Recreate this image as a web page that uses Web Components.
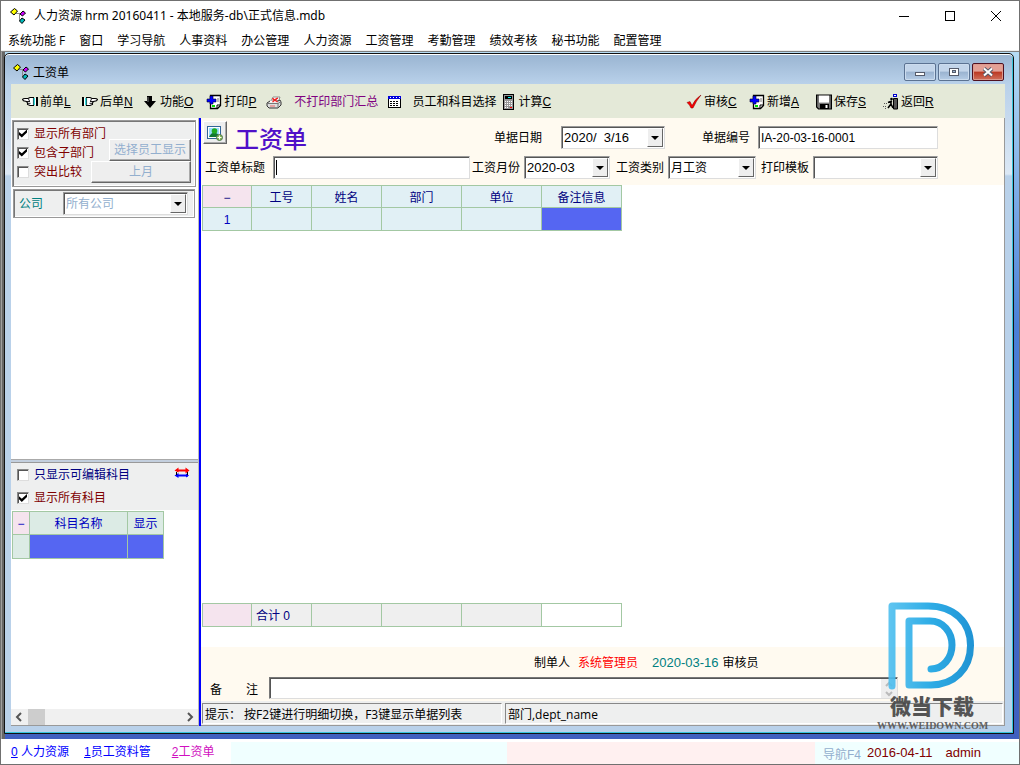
<!DOCTYPE html>
<html lang="zh-CN">
<head>
<meta charset="utf-8">
<title>人力资源 hrm</title>
<style>
  html, body { margin: 0; height: 100%; }
  body { font: 12px/16px "Liberation Sans", "Noto Sans CJK SC", sans-serif; color: #000; }
</style>
</head>
<body>
<hr-app></hr-app>
<script>
const define = (name, render) => customElements.define(name, class extends HTMLElement {
  connectedCallback() {
    if (this.shadowRoot) return;
    const t = document.createElement('template');
    t.innerHTML = '<style>*{box-sizing:border-box}:host{box-sizing:border-box}</style>' + render(this);
    this.attachShadow({ mode: 'open' }).append(t.content.cloneNode(true));
  }
});
const attr = (el, n, d = '') => el.getAttribute(n) ?? d;

/* ---------- icons ---------- */
const hand = `<path d="M.5 5.500Q1 4.500 3 4.500H6L8 3.500H11.500V11.500H8L5.500 10.500V9L4.500 7.500 1.500 6.700z" fill="#fff" stroke="#000" stroke-width="1.100"/><path d="M5 7.500H8M6 9.300H8.500M6 5.500L8 6.500" stroke="#000" fill="none" stroke-width=".9"/><rect x="11.500" y="4" width="1.500" height="7" fill="#3dd"/><rect x="13" y="4" width="1" height="7" fill="#fff"/><rect x="14" y="3" width="2" height="9"/>`;
const icons = {
  app: `<g shape-rendering="crispEdges"><path d="M6 5h6M9 5v7h3" stroke="#888" fill="none"/></g><path d="M.5 4L4.500.5 7.500 3 4 7z" fill="#ff0" stroke="#000"/><path d="M10 6l3-3 2.500 2-3 3z" fill="#c0f" stroke="#000"/><path d="M9.500 13l2.500-3 3 2-3 3.500z" fill="#0bb" stroke="#000"/>`,
  prev: hand,
  next: `<g transform="matrix(-1 0 0 1 16 0)">${hand}</g>`,
  down: `<path d="M5 2h5v5h4L8 14 2 7h3z"/><path d="M6 3v5" stroke="#777"/>`,
  page: `<path d="M4.500 1.500h10v10l-3 3h-7z" fill="#fff" stroke="#000" stroke-width="1.300"/><path d="M14 11h-3v3" fill="none" stroke="#000"/><path d="M11 5h2M11 7h2" stroke="#777"/><rect x="6" y="11" width="3" height="2" fill="#0d0"/><path d="M4 2h3v3h3v3H7v2H4V8H1V5h3z" fill="#00f" stroke="#003" stroke-width=".6"/>`,
  printer: `<path d="M4 9l3-6h7l-2 6z" fill="#fff" stroke="#777" stroke-width=".8"/><path d="M6.500 4.500l5 3M12 4L6.500 7" stroke="#e22" stroke-width="1.300"/><path d="M1 9l3-2h8l2-1 1 2v3l-3 3H3l-2-2z" fill="#ddd" stroke="#333"/><path d="M4 6.500h7v2H4z" fill="#fff"/><path d="M6.500 4.500l5 3.500M11.500 4L6.500 8" stroke="#e22" stroke-width="1.300"/><path d="M1 9.500h11l3-2M12 9.500v4" fill="none" stroke="#777"/><path d="M4 12h5" stroke="#e66"/>`,
  calendar: `<path d="M1 2h13v12H1z"/><path d="M2 5h11v8H2z" fill="#fff"/><path d="M1 2h13v3H1z" fill="#00d"/><path d="M3 3.500h10" stroke="#fff" stroke-dasharray="1 2"/><path d="M3 7.500h9M3 9.500h9M3 11.500h9" stroke="#000" stroke-dasharray="2 1"/>`,
  calc: `<rect x="3.500" y=".5" width="10" height="15" fill="#999" stroke="#000"/><rect x="5" y="2" width="7" height="3"/><path d="M8 3.500h3" stroke="#0ff"/><path d="M5 7.500h7M5 9.500h7M5 11.500h7M5 13.500h4" stroke="#fff" stroke-dasharray="1 1"/><path d="M10 13.500h2" stroke="#f00"/>`,
  check: `<path d="M1 8.500l3-1 2 4Q9 5 15 1q-5 6-8 13H5Q4 11 1 8.500z" fill="#f00" stroke="#700" stroke-width=".5"/>`,
  save: `<path d="M.6 1h14.800v14H2.500L.6 13z" fill="#777" stroke="#000" stroke-width="1.200"/><rect x="3" y="1.600" width="10" height="7" fill="#fff"/><rect x="4" y="10" width="9" height="5"/><rect x="9.500" y="11" width="2" height="3" fill="#fff"/>`,
  exit: `<path d="M10.500 4.500h4V15h-4z" fill="#555" stroke="#000"/><rect x="10.500" y=".5" width="3" height="2" fill="#fff" stroke="#00c"/><circle cx="8.500" cy="5" r="1.300"/><path d="M9 7L5 8.500M8 7v3l-3 4M8 10l2 4" stroke="#000" stroke-width="1.600" fill="none"/><path d="M1 9.500h3M0 12.500h4M2 14.500h2" stroke="#555" stroke-dasharray="1 1"/>`,
  swap: `<path d="M3 10.500h11" stroke-width="2" stroke="#00f"/><path d="M3 5.500h11" stroke-width="2" stroke="#f00"/><path d="M11.500 2.500l4 3-4 3zM4.500 2.500l-4 3 4 2z" fill="#f00"/><path d="M4.500 8l-4 2.500 4 2.500zM12 8.500l3 2-3 2z" fill="#00f"/><path d="M2.500 7v3M13.500 7v3" stroke="#000"/>`,
  picture: `<rect x=".5" y="1.500" width="13" height="12" fill="#fff" stroke="#369"/><rect x="2" y="3" width="10" height="9" fill="#9df"/><path d="M2 12q2-4 4-4h3q3 1 3 4z" fill="#173"/><circle cx="7.500" cy="6" r="2.800" fill="#2a2"/><circle cx="12.500" cy="12.500" r="3" fill="#8b5" stroke="#575"/><path d="M12.500 10.500v4M10.500 12.500h4" stroke="#fff"/>`
};
define('ui-icon', el => `<style>:host{display:block;width:16px;height:16px;flex:none}svg{display:block}</style>
<svg width="16" height="16" viewBox="0 0 16 16" aria-hidden="true">${icons[attr(el, 'name')]}</svg>`);

/* ---------- controls ---------- */
define('tool-button', el => `<style>
:host{display:block;flex:none}
button{display:flex;align-items:center;height:20px;padding:0;border:0;background:none;font:inherit;color:inherit;white-space:nowrap}
.i{width:20px;display:flex;justify-content:center}
.t{min-width:var(--text,33px);text-align:left}
</style><button type="button" ${el.hasAttribute('label') ? `aria-label="${attr(el, 'label')}"` : ''}>${el.hasAttribute('icon') ? `<span class="i"><ui-icon name="${attr(el, 'icon')}"></ui-icon></span>` : ''}<span class="t"><slot></slot></span></button>`);

define('ui-check', el => `<style>
:host{display:block}
label{display:flex;align-items:center;height:19px;gap:5px;white-space:nowrap}
input{appearance:none;margin:0;width:12px;height:12px;flex:none;background:#fff;border:1px solid;border-color:#888 #ddd #ddd #888;box-shadow:inset 1px 1px #555}
input:checked::before{content:"";display:block;width:8px;height:8px;margin:1px;background:#000;clip-path:polygon(0 30%,35% 60%,100% 0,100% 38%,35% 100%,0 68%)}
</style><label><input type="checkbox" ${el.hasAttribute('checked') ? 'checked' : ''}><slot></slot></label>`);

define('ui-push', () => `<style>
:host{display:block}
button{display:block;width:100%;height:22px;padding:0;font:inherit;line-height:20px;color:#93afce;background:#eee;border:1px solid;border-color:#fff #666 #666 #fff;box-shadow:inset -1px -1px #aaa}
</style><button type="button" disabled><slot></slot></button>`);

/* label + text box or drop-down; --gap is the space between the two */
define('ui-field', el => {
  const v = attr(el, 'value');
  const control = attr(el, 'kind') === 'select'
    ? `<select id="c" ${el.hasAttribute('disabled') ? 'disabled' : ''}><option>${v}</option></select><i></i>`
    : `<input id="c" type="text" value="${v}">`;
  return `<style>
:host{display:flex;align-items:center;gap:var(--gap,4px);flex:none}
label{white-space:nowrap;color:inherit;padding-top:1px}
.box{position:relative;width:var(--w,auto);flex:1;height:23px;background:#fff;border:1px solid;border-color:#999 #ddd #ddd #999;box-shadow:inset 1px 1px #555}
input,select{appearance:none;display:block;width:100%;height:21px;margin:0;padding:0 2px;border:0;border-radius:0;background:none;color:#000;opacity:1;font:inherit;font-size:var(--fs,12px);outline:0}
:host([disabled]) select{color:#93afce}
:host([caret]) input{background:linear-gradient(#000,#000) 2px 3px/1px 15px no-repeat}
i{position:absolute;right:1px;top:1px;bottom:1px;width:16px;background:#eee;border:1px solid;border-color:#fff #666 #666 #fff;pointer-events:none}
i::before{content:"";position:absolute;left:3px;top:7px;border:4px solid transparent;border-top-color:#000;border-bottom:0}
</style><label for="c">${attr(el, 'label')}</label><div class="box">${control}</div>`;
});

/* ---------- application frame ---------- */
define('hr-titlebar', () => `<style>
:host{display:flex;align-items:center;height:29px;padding:0 17px 0 9px;background:#fff;font-family:"Noto Sans","Noto Sans CJK SC",sans-serif}
h1{flex:1;margin:0 0 0 8px;font-size:12px;font-weight:400}
button{border:0;padding:0;background:none;width:12px;height:12px;margin-left:34px}
svg{display:block}
</style><ui-icon name="app"></ui-icon><h1>人力资源 hrm 20160411 - 本地服务-db\\正式信息.mdb</h1>
<button aria-label="最小化"><svg width="12" height="12" stroke="#000"><path d="M1 6.500h10"/></svg></button>
<button aria-label="最大化"><svg width="12" height="12" stroke="#000" fill="none"><rect x="1.500" y="1.500" width="9" height="9"/></svg></button>
<button aria-label="关闭"><svg width="12" height="12" stroke="#000"><path d="M1 1l10 10M11 1L1 11"/></svg></button>`);

define('hr-menubar', () => `<style>
:host{display:flex;align-items:center;gap:14px;height:21px;padding:2px 7px 0;background:#fff;border-bottom:1px solid #eee;font-family:"Open Sans","Noto Sans CJK SC",sans-serif}
a{color:#000;text-decoration:none;white-space:nowrap}
</style>` + ['系统功能 F', '窗口', '学习导航', '人事资料', '办公管理', '人力资源', '工资管理', '考勤管理', '绩效考核', '秘书功能', '配置管理'].map(t => `<a href="#">${t}</a>`).join(''));

define('hr-toolbar', () => `<style>
:host{display:flex;align-items:center;height:34px;padding:2px 71px 0 9px;background:#e4e9d8}
div{display:flex;gap:7px}
.more{margin-left:4px}.text{--text:84px;color:#800080;margin-left:3px}.icon{--text:0px}
.cal{--text:84px;margin:0 -5px 0 0}
.r{margin-left:auto;gap:10px}
.r .far{margin-left:4px}
</style><div>
<tool-button icon="prev">前单<u>L</u></tool-button>
<tool-button icon="next">后单<u>N</u></tool-button>
<tool-button icon="down">功能<u>O</u></tool-button>
<tool-button icon="page" class="more">打印<u>P</u></tool-button>
<tool-button icon="printer" label="打印机" class="icon"></tool-button>
<tool-button class="text">不打印部门汇总</tool-button>
<tool-button icon="calendar" label="日历" class="icon"></tool-button>
<tool-button class="cal">员工和科目选择</tool-button>
<tool-button icon="calc">计算<u>C</u></tool-button>
</div><div class="r">
<tool-button icon="check">审核<u>C</u></tool-button>
<tool-button icon="page">新增<u>A</u></tool-button>
<tool-button icon="save" class="far">保存<u>S</u></tool-button>
<tool-button icon="exit" class="far">返回<u>R</u></tool-button>
</div>`);

define('hr-scrollbar', () => `<style>
:host{display:flex;align-items:center;height:16px;background:#f0f0f0}
b{width:17px;height:16px;background:#cdcdcd}
svg{width:17px;height:16px;fill:none;stroke:#555;stroke-width:2}
svg:last-child{margin-left:auto}
</style><svg viewBox="0 0 17 16"><path d="M10 4L6 8l4 4"/></svg><b></b><svg viewBox="0 0 17 16"><path d="M7 4l4 4-4 4"/></svg>`);

const tableCss = `table{border-collapse:collapse;table-layout:fixed}
th,td{padding:2px 0 0;height:23px;border:1px solid #a3c8a3;font-weight:400;text-align:center;color:#000080;background:#e1f0f5}
th{height:22px}
.p{background:#f5e4ee}.s{background:#5566f2}.g{background:#efefef}.w{background:#fff}.k{background:#dcebe5}.k,.n{color:#0000c0}`;

define('hr-sidebar', () => `<style>
:host{display:flex;flex-direction:column;width:188px;flex:none;background:#fff;border-bottom:1px solid #999;border-right:1px solid #bbb}
.box{background:#eeefef;border:1px solid #999;box-shadow:inset 1px 1px #777,inset -1px -1px #fff}
.top{display:flex;height:67px;margin:2px 2px 0 1px;padding:3px 4px}
.top .l{width:74px;flex:none;color:#800000}
.top .b{flex:1;display:flex;flex-direction:column;justify-content:flex-end}
.top ui-push:first-child{margin-left:18px}
.co{height:29px;margin:2px 3px 0 2px;padding:2px 6px 2px 5px}
.co ui-field{color:#008080;--gap:20px}
.list{flex:9 1 0}
.grid{flex:8 1 0;display:flex;flex-direction:column}
.split{height:4px;background:#c3cfde;border-top:1px solid #aaa;border-bottom:1px solid #999}
.low{height:47px;padding:2px 8px 2px 6px;background:#eeefef;display:grid;grid-template-columns:1fr auto;row-gap:3px}
.low ui-check:first-child{color:#000080}.low ui-check:last-child{color:#800000}
${tableCss} table{width:152px;margin:1px 0 0 1px}
td{height:24px}th{height:23px}
hr-scrollbar{margin-top:auto}
</style>
<div class="box top"><div class="l"><ui-check checked>显示所有部门</ui-check><ui-check checked>包含子部门</ui-check><ui-check>突出比较</ui-check></div>
<div class="b"><ui-push>选择员工显示</ui-push><ui-push>上月</ui-push></div></div>
<div class="box co"><ui-field kind="select" label="公司" value="所有公司" disabled></ui-field></div>
<div class="list"></div><div class="split"></div>
<div class="low"><ui-check>只显示可编辑科目</ui-check><ui-icon name="swap"></ui-icon><ui-check checked>显示所有科目</ui-check></div>
<div class="grid"><table><colgroup><col style="width:17px"><col style="width:98px"><col style="width:36px"></colgroup>
<tr><th class="p n">−</th><th class="k">科目名称</th><th class="k">显示</th></tr><tr><td class="k"></td><td class="s"></td><td class="s"></td></tr></table>
<hr-scrollbar></hr-scrollbar></div>`);

const cols = `<colgroup><col style="width:49px"><col style="width:60px"><col style="width:70px"><col style="width:80px"><col style="width:80px"><col style="width:80px"></colgroup>`;
define('hr-payslip', () => `<style>
:host{display:flex;flex-direction:column;flex:1;min-width:0;background:#fff;border-right:1px solid #999}
.head{background:#fffaf0;height:67px;padding:3px 66px 0 2px}
.r1,.r2{display:flex;align-items:center}
.r1{height:33px}.r2{height:27px;padding-left:2px}
.pic{width:24px;height:23px;padding:2px 3px;background:#eee;border:1px solid;border-color:#fff #666 #666 #fff;box-shadow:inset -1px -1px #aaa;align-self:flex-start}
h2{margin:4px auto 0 8px;font-size:24px;line-height:32px;font-weight:500;color:#5010c8}
.date{--w:104px;--gap:19px;--fs:13px;margin-right:37px}
.no{--w:180px;--gap:8px;--fs:12px}
.title{flex:1;--gap:8px;margin-right:2px}
.mon{--w:86px;margin-right:6px;--fs:13px}.kind{--w:88px;margin-right:5px}.tpl{--w:125px}
${tableCss} table{width:420px;margin-left:1px}
.body{flex:1}
.sum td{text-align:left;padding-left:4px}
.foot{background:#fffaf0;height:54px;margin-top:20px;padding:8px 106px 0 8px}
.sign{display:flex;padding-left:325px;height:16px}
.sign b{font-weight:400;color:#f00;margin:0 14px 0 8px}.sign time{color:#008080;margin-right:4px;font-size:13px;flex:none}
.memo{display:flex;align-items:center;height:22px;margin-top:6px;position:relative}
.memo label{width:60px;flex:none;display:flex;gap:24px;padding:3px 0 0 1px}
textarea{flex:1;height:22px;resize:none;margin:0;border:1px solid;border-color:#777 #ddd #ddd #777;box-shadow:inset 1px 1px #555;font:inherit;outline:0;overflow:hidden;background:#fff}
.spin{position:absolute;right:1px;top:2px;width:16px;height:19px;background:#eee}
.status{display:flex;gap:3px;height:25px;padding:2px 1px 1px 1px;background:#eeefef;border-bottom:1px solid #999;font-family:"Open Sans","Noto Sans CJK SC",sans-serif}
.status span{flex:1;border:1px solid;border-color:#888 #fff #fff #888;padding:3px 2px 0;white-space:nowrap}
.status span:first-child{flex:none;width:300px}
</style>
<div class="head"><div class="r1"><button class="pic" aria-label="图片"><ui-icon name="picture"></ui-icon></button><h2>工资单</h2>
<ui-field class="date" kind="select" label="单据日期" value="2020/&nbsp; 3/16"></ui-field><ui-field class="no" label="单据编号" value="IA-20-03-16-0001"></ui-field></div>
<div class="r2"><ui-field class="title" label="工资单标题" caret></ui-field><ui-field class="mon" kind="select" label="工资月份" value="2020-03"></ui-field>
<ui-field class="kind" kind="select" label="工资类别" value="月工资"></ui-field><ui-field class="tpl" kind="select" label="打印模板"></ui-field></div></div>
<div class="body"><table>${cols}<tr><th class="p">−</th><th>工号</th><th>姓名</th><th>部门</th><th>单位</th><th>备注信息</th></tr>
<tr><td class="n">1</td><td></td><td></td><td></td><td></td><td class="s"></td></tr></table></div>
<table class="sum">${cols}<tr><td class="p"></td><td class="g">合计 0</td><td class="g"></td><td class="g"></td><td class="g"></td><td class="w"></td></tr></table>
<div class="foot"><div class="sign">制单人<b>系统管理员</b><time>2020-03-16</time>审核员</div>
<div class="memo"><label for="memo"><span>备</span><span>注</span></label><textarea id="memo" rows="1"></textarea>
<svg class="spin" viewBox="0 0 16 19" fill="none" stroke="#bbb" stroke-width="2"><path d="M5 7l3-3 3 3M5 13l3 3 3-3"/></svg></div></div>
<div class="status"><span>提示： 按F2键进行明细切换，F3键显示单据列表</span><span>部门,dept_name</span></div>`);

define('hr-window', () => `<style>
:host{display:flex;flex-direction:column;flex:1;border:1px solid #111;border-radius:5px 5px 0 0;padding:0 8px 7px 6px;
background:linear-gradient(#99b4d1,#b9d1ea 30px,#dce8f5 120px,#b9d1ea 122px);box-shadow:inset 0 1px #fff,inset -1px -1px #35c5dc}
header{display:flex;align-items:center;height:30px;gap:4px;padding:5px 1px 0 2px}
h2{flex:1;margin:0;font-size:12px;font-weight:400;font-family:"Noto Sans CJK SC",sans-serif}
.c{display:flex;gap:2px}
.c button{display:flex;align-items:center;justify-content:center;width:32px;height:18px;padding:0;border:1px solid #5b7292;border-radius:2px;background:linear-gradient(#c3d5ea 45%,#9ab3d0 50%,#b5cce6);box-shadow:inset 0 0 0 1px #ccdcee}
.c .x{border-color:#501020;background:linear-gradient(#e3a095 45%,#bb3822 50%,#d0705c);box-shadow:inset 0 0 0 1px #dc9a8e}
main{display:flex;flex:1;min-height:0}
.bar{width:2px;background:#00f}
</style>
<header><ui-icon name="app"></ui-icon><h2>工资单</h2><div class="c">
<button aria-label="最小化"><svg width="12" height="10"><rect x="1.500" y="5.500" width="9" height="3" fill="#fff" stroke="#555b6b"/></svg></button>
<button aria-label="还原"><svg width="12" height="10"><rect x="1.500" y="1.500" width="9" height="7" fill="#fff" stroke="#555b6b"/><rect x="4.500" y="3.500" width="3" height="2" fill="#9ab3d0" stroke="#555b6b"/></svg></button>
<button class="x" aria-label="关闭"><svg width="12" height="10"><path d="M2 1.500l8 7M10 1.500l-8 7" stroke="#555b6b" stroke-width="4"/><path d="M2 1.500l8 7M10 1.500l-8 7" stroke="#fff" stroke-width="2"/></svg></button>
</div></header>
<hr-toolbar></hr-toolbar><main><hr-sidebar></hr-sidebar><div class="bar"></div><hr-payslip></hr-payslip></main>`);

define('hr-taskbar', () => `<style>
:host{display:flex;height:25px;padding-top:3px;background:#fff}
nav{display:flex;width:230px;flex:none;align-items:center;padding-bottom:2px}
a{color:#00f;white-space:nowrap;text-decoration:none}
a:first-child{margin:0 15px 0 10px}a:last-child{color:#d010c0;margin-left:21px}
.c{background:#f0ffff;width:276px;flex:none}.p{background:#fff0f0;flex:1}
.e{display:flex;align-items:center;gap:6px;width:204px;flex:none;padding-left:8px;background:#f0ffff;color:#800000;white-space:nowrap;font-size:13px}
.e button{border:0;background:none;padding:0;font-size:12px;font-family:inherit;color:#93afce}.e b{font-weight:400;margin-left:7px}
</style><nav><a href="#"><u>0</u> 人力资源</a><a href="#"><u>1</u>员工资料管</a><a href="#"><u>2</u>工资单</a></nav>
<div class="c"></div><div class="p"></div><div class="e"><button>导航F4</button><time>2016-04-11</time><b>admin</b></div>`);

define('hr-watermark', () => `<style>
:host{display:block;width:110px;text-align:center;pointer-events:none;opacity:.9}
svg{display:block;margin:0 auto}
strong{display:block;font:900 21px/28px "Noto Sans CJK SC",sans-serif;color:#444}
span{display:block;font:700 10px/14px "Liberation Serif",serif;color:#555}
</style><svg width="90" height="90" viewBox="887 599 90 90" fill="none" stroke="url(#g)" stroke-width="7" stroke-linecap="round" stroke-linejoin="round">
<defs><linearGradient id="g" gradientUnits="userSpaceOnUse" x1="888" y1="0" x2="974" y2="0"><stop offset="0" stop-color="#50c0f0"/><stop offset=".5" stop-color="#18a4e4"/><stop offset="1" stop-color="#0888d0"/></linearGradient></defs>
<path d="M892 684V604H928C954 604 970.500 620 970.500 643.500S954 683 931 683H909V619H930C943 619 952 630 952 643S943 667 931 667"/></svg><strong>微当下载</strong><span>WWW.WEIDOWN.COM</span>`);

define('hr-app', () => `<style>
:host{position:relative;display:flex;flex-direction:column;min-height:100%;border:1px solid #707070;background:#fff;overflow:hidden}
.mdi{display:flex;flex:1;padding:1px 5px 5px 2px;border-top:1px solid #808080;border-left:1px solid #a0a0a0;
background:linear-gradient(90deg,#666 3px,transparent 3px),linear-gradient(#b5dcf5,#4a80d8 40%,#3f5fbf)}
hr-watermark{position:absolute;right:32px;bottom:31px}
</style><hr-titlebar></hr-titlebar><hr-menubar></hr-menubar><div class="mdi"><hr-window></hr-window></div><hr-taskbar></hr-taskbar><hr-watermark></hr-watermark>`);
</script>
</body>
</html>
